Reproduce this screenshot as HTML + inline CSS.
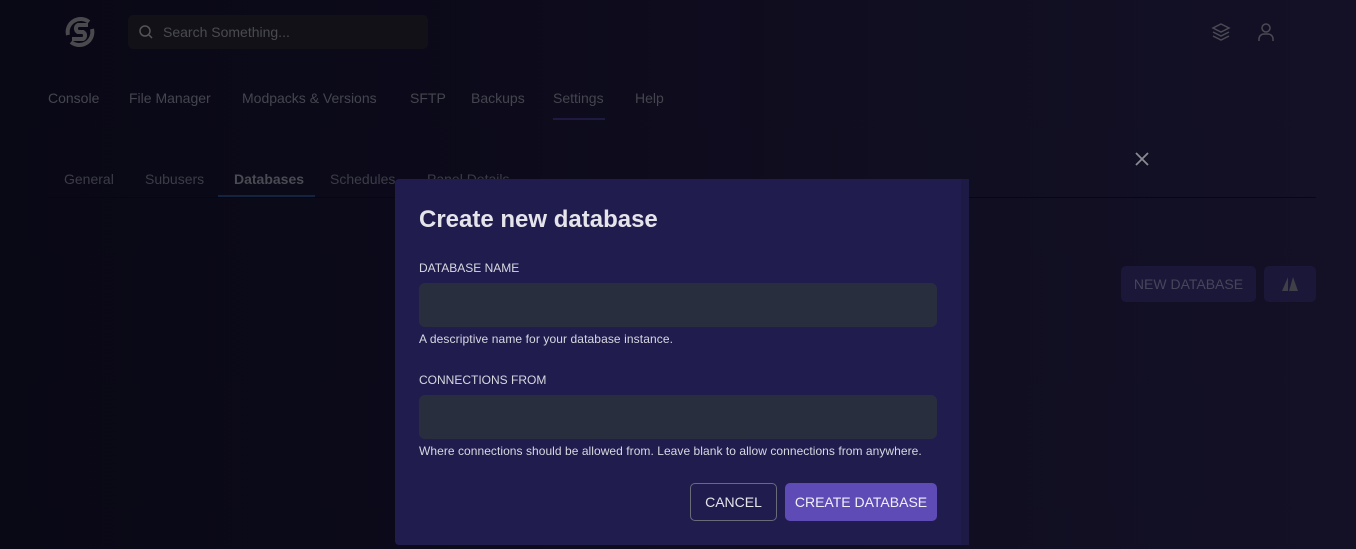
<!DOCTYPE html>
<html><head><style>
*{margin:0;padding:0;box-sizing:border-box}
body{width:1356px;height:549px;overflow:hidden;background:linear-gradient(90deg,#090815 0%,#0e0c1d 50%,#141127 100%);font-family:"Liberation Sans",sans-serif;position:relative;color:#ddd}
.a{position:absolute}
.nav{font-size:14px;color:#45454f;top:90px}
.sub{font-size:14px;color:#3c3c47;top:171px}
.lbl{font-size:12px;color:#d8d8e0;left:24px}
.inp{left:24px;width:518px;height:44px;background:#292e3e;border-radius:6px}
.hint{font-size:12px;color:#d8d8e0;left:24px;white-space:nowrap}
</style></head><body>
<svg class="a" style="left:63px;top:15px" width="34" height="34" viewBox="0 0 34 34"><path d="M26 7 A13 13 0 0 0 5 20" fill="none" stroke="#4a4a4e" stroke-width="4"/><path d="M8 27 A13 13 0 0 0 29 14" fill="none" stroke="#4a4a4e" stroke-width="4"/><path d="M25 10 H15 a4 4 0 0 0 0 7 h5 a4 4 0 0 1 0 7 H9" fill="none" stroke="#4a4a4e" stroke-width="4"/></svg>
<div class="a" style="left:128px;top:15px;width:300px;height:34px;background:#111117;border-radius:5px"></div>
<svg class="a" style="left:138px;top:24px" width="16" height="16" viewBox="0 0 16 16"><circle cx="7" cy="7" r="5" fill="none" stroke="#555" stroke-width="1.5"/><path d="M11 11l3 3" stroke="#555" stroke-width="1.5"/></svg>
<div class="a" style="left:163px;top:24px;font-size:14px;color:#4a4a52">Search Something...</div>
<svg class="a" style="left:1210px;top:22px" width="22" height="20" viewBox="0 0 22 20"><path d="M11 2l8 4-8 4-8-4z M3 10l8 4 8-4 M3 14l8 4 8-4" fill="none" stroke="#4a4a52" stroke-width="1.5"/></svg>
<svg class="a" style="left:1257px;top:22px" width="18" height="20" viewBox="0 0 18 20"><circle cx="9" cy="6" r="4" fill="none" stroke="#4a4a52" stroke-width="1.5"/><path d="M2 19v-2a5 5 0 0 1 5-5h4a5 5 0 0 1 5 5v2" fill="none" stroke="#4a4a52" stroke-width="1.5"/></svg>
<div class="a nav" style="left:48px">Console</div>
<div class="a nav" style="left:129px">File Manager</div>
<div class="a nav" style="left:242px">Modpacks &amp; Versions</div>
<div class="a nav" style="left:410px">SFTP</div>
<div class="a nav" style="left:471px">Backups</div>
<div class="a nav" style="left:553px">Settings</div>
<div class="a" style="left:553px;top:118px;width:52px;height:2px;background:#1e1a40"></div>
<div class="a nav" style="left:635px">Help</div>
<div class="a sub" style="left:64px">General</div>
<div class="a sub" style="left:145px">Subusers</div>
<div class="a sub" style="left:234px;font-weight:bold;color:#4a4a52">Databases</div>
<div class="a sub" style="left:330px">Schedules</div>
<div class="a sub" style="left:427px">Panel Details</div>
<div class="a" style="left:48px;top:197px;width:1268px;height:1px;background:#08070f"></div>
<div class="a" style="left:218px;top:195px;width:97px;height:2px;background:#142340"></div>
<svg class="a" style="left:1134px;top:151px" width="16" height="16" viewBox="0 0 16 16"><path d="M2 2l12 12M14 2L2 14" stroke="#8a8a94" stroke-width="1.8"/></svg>
<div class="a" style="left:1121px;top:266px;width:135px;height:36px;background:#1a1738;border-radius:5px;font-size:14px;color:#46465a;text-align:center;line-height:36px">NEW DATABASE</div>
<div class="a" style="left:1264px;top:266px;width:52px;height:36px;background:#1a1738;border-radius:5px"></div>
<svg class="a" style="left:1280px;top:275px" width="20" height="18" viewBox="0 0 20 18"><path d="M2 16L8 2v14zM9 16l4-14 5 14z" fill="#3f3f48"/></svg>
<div class="a" style="left:395px;top:179px;width:574px;height:366px;background:#201c4e;border-radius:4px">
<div class="a" style="right:0;top:0;width:8px;height:100%;background:#1d1a46"></div>
<div class="a" style="left:24px;top:27px;font-size:24px;font-weight:bold;color:#e4e4ea">Create new database</div>
<div class="a lbl" style="top:82px">DATABASE NAME</div>
<div class="a inp" style="top:104px"></div>
<div class="a hint" style="top:153px;letter-spacing:0.1px">A descriptive name for your database instance.</div>
<div class="a lbl" style="top:194px">CONNECTIONS FROM</div>
<div class="a inp" style="top:216px"></div>
<div class="a hint" style="top:265px;letter-spacing:0.05px">Where connections should be allowed from. Leave blank to allow connections from anywhere.</div>
<div class="a" style="left:295px;top:304px;width:87px;height:38px;border:1px solid #6a6a78;border-radius:5px;font-size:14px;color:#e4e4ea;text-align:center;line-height:36px">CANCEL</div>
<div class="a" style="left:390px;top:304px;width:152px;height:38px;background:#5f4bb6;border-radius:5px;font-size:14px;color:#f0f0f8;text-align:center;line-height:38px">CREATE DATABASE</div>
</div>
</body></html>
